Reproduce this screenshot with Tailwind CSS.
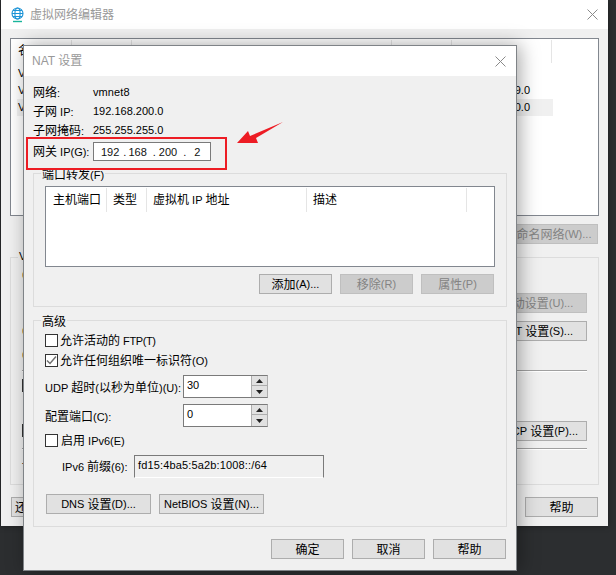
<!DOCTYPE html>
<html><head><meta charset="utf-8">
<script src="https://cdn.jsdelivr.net/npm/@tailwindcss/browser@4"></script>
</head>
<body class="m-0">
<div class="relative w-[616px] h-[575px] overflow-hidden bg-[#2c2e30] text-[11px] leading-none text-black font-['Liberation_Sans','Noto_Sans_CJK_SC',sans-serif]">

  <!-- back window -->
  <div class="absolute left-[1px] top-0 w-[607px] h-[526px] bg-[#f0f0f0] flex flex-col shadow-[0_0_6px_rgba(0,0,0,0.4)]">
    <div class="h-[29px] shrink-0 bg-white flex items-center justify-between pl-[10px] pr-[10px]">
      <div class="flex items-center gap-[6px] text-[#999] text-[12px]">
        <svg width="13" height="16" viewBox="0 0 13 16" fill="none" stroke="#1c93d6" stroke-width="1.1"><circle cx="6.5" cy="6.5" r="5.5"/><ellipse cx="6.5" cy="6.5" rx="2.6" ry="5.5"/><path d="M1 6.500H12M2 3.500H11M2 9.500H11"/><path d="M2 14.500H11" stroke="#19b59b" stroke-width="1.4"/></svg>
        <span>虚拟网络编辑器</span>
      </div>
      <svg width="11" height="11" viewBox="0 0 11 11" stroke="#8a8a8a" fill="none"><path d="M0.500 0.500L10.500 10.500M10.500 0.500L0.500 10.500"/></svg>
    </div>
    <div class="pl-[9px] pt-[9px] w-[598px] flex flex-col flex-1">
      <div class="h-[178px] shrink-0 bg-white border border-[#82878f] pt-[1px] pl-[6px]">
        <div class="flex h-[25px]">
          <div class="w-[55px] h-[23px] border-r border-[#e5e5e5] pl-[1px] pt-[5px] text-[12px]">名</div>
          <div class="w-[60px] h-[23px] border-r border-[#e5e5e5]"></div>
          <div class="w-[260px] h-[23px] border-r border-[#e5e5e5]"></div>
          <div class="w-[60px] h-[23px] border-r border-[#e5e5e5]"></div>
          <div class="w-[100px] h-[23px] border-r border-[#e5e5e5]"></div>
        </div>
        <div class="w-[536px] h-[17px] flex items-center justify-between pl-[1px] pr-[23px]"><span>V</span><span></span></div>
        <div class="w-[536px] h-[17px] flex items-center justify-between pl-[1px] pr-[23px]"><span>V</span><span>9.0</span></div>
        <div class="w-[536px] h-[17px] flex items-center justify-between pl-[1px] pr-[23px] bg-[#f0f0f0]"><span>V</span><span>0.0</span></div>
      </div>
      <div class="mt-[8px] h-[20px] flex justify-end pr-[1px]">
        <div class="w-[100px] h-[20px] pt-[1px] bg-[#cccccc] border border-[#bfbfbf] text-[#838383] flex items-center justify-center"><span class="text-[12px]">重命名网络</span>(W)...</div>
      </div>
      <div class="relative mt-[13px] h-[228px] border border-[#dcdcdc] pl-[11px] pr-[11px] flex flex-col">
        <span class="absolute left-[7px] -top-[7px] bg-[#f0f0f0] px-[1px]">V</span>
        <div class="h-[35px] pt-[11px]"><span>(</span></div>
        <div class="h-[28px] flex justify-end">
          <div class="w-[100px] h-[20px] pt-[1px] bg-[#cccccc] border border-[#bfbfbf] text-[#838383] flex items-center justify-center"><span class="text-[12px]">自动设置</span>(U)...</div>
        </div>
        <div class="h-[25px] flex justify-between">
          <span class="pt-[4px]">(</span>
          <div class="w-[100px] h-[20px] pt-[1px] bg-[#e1e1e1] border border-[#adadad] flex items-center justify-center">NAT&nbsp;<span class="text-[12px]">设置</span>(S)...</div>
        </div>
        <div class="h-[24px] pt-[3px]"><span>(</span></div>
        <div class="h-[2px] border-t border-[#a0a0a0] border-b-white border-b"></div>
        <div class="h-[7px]"></div>
        <div class="h-[42px]"><div class="w-[13px] h-[13px] border border-[#333] bg-white"></div></div>
        <div class="h-[27px] flex justify-between">
          <div class="w-[13px] h-[13px] mt-[3px] border border-[#333] bg-white"></div>
          <div class="w-[100px] h-[20px] pt-[1px] bg-[#e1e1e1] border border-[#adadad] flex items-center justify-center">DHCP&nbsp;<span class="text-[12px]">设置</span>(P)...</div>
        </div>
        <div class="h-[2px] border-t border-[#a0a0a0] border-b-white border-b"></div>
        <div class="pt-[12px]">T</div>
      </div>
      <div class="mt-[12px] h-[20px] flex justify-between pl-[1px] pr-[1px]">
        <div class="w-[73px] h-[20px] pt-[1px] bg-[#e1e1e1] border border-[#adadad] flex items-center pl-[3px]"><span class="text-[12px]">还</span></div>
        <div class="w-[73px] h-[20px] pt-[1px] bg-[#e1e1e1] border border-[#adadad] flex items-center justify-center"><span class="text-[12px]">帮助</span></div>
      </div>
    </div>
  </div>

  <!-- NAT dialog -->
  <div class="absolute left-[23px] top-[45px] w-[494px] h-[526px] bg-[#f0f0f0] border border-[#7f8387] flex flex-col shadow-[3px_0_18px_rgba(0,0,0,0.35)]">
    <div class="h-[30px] shrink-0 bg-white flex items-center justify-between pl-[8px] pr-[10px]">
      <span class="text-[#999] text-[12px]">NAT 设置</span>
      <svg width="11" height="11" viewBox="0 0 11 11" stroke="#8a8a8a" fill="none"><path d="M0.500 0.500L10.500 10.500M10.500 0.500L0.500 10.500"/></svg>
    </div>
    <div class="pl-[9px] w-[483px] flex flex-col">
      <div class="pt-[7px]">
        <div class="h-[19px] flex items-center"><span class="w-[60px]"><span class="text-[12px]">网络</span>:</span><span class="tracking-[0.1px]">vmnet8</span></div>
        <div class="h-[19px] flex items-center"><span class="w-[60px]"><span class="text-[12px]">子网</span> IP:</span><span>192.168.200.0</span></div>
        <div class="h-[19px] flex items-center"><span class="w-[60px]"><span class="text-[12px]">子网掩码</span>:</span><span>255.255.255.0</span></div>
        <div class="h-[19px] mt-[2px] flex items-center"><span class="w-[60px]"><span class="text-[12px]">网关</span> IP(G):</span>
          <div class="w-[118px] h-[19px] pt-[1px] bg-white border border-[#7a7a7a] flex items-center pl-[7px] text-[#111]">
            <span>192</span><span class="ml-[4px]">.</span><span class="ml-[2px]">168</span><span class="ml-[6px]">.</span><span class="ml-[3px]">200</span><span class="ml-[6px]">.</span><span class="ml-[8px]">2</span>
          </div>
        </div>
      </div>

      <div class="relative mt-[12px] h-[134px] border border-[#dcdcdc] pt-[12px] pl-[11px]">
        <span class="absolute left-[7px] -top-[5px] bg-[#f0f0f0] px-[1px]"><span class="text-[12px]">端口转发</span>(F)</span>
        <div class="w-[450px] h-[81px] bg-white border border-[#82878f] pt-[1px]">
          <div class="flex h-[24px]">
            <div class="w-[61px] border-r border-[#e5e5e5] pl-[7px] flex items-center text-[12px]">主机端口</div>
            <div class="w-[40px] border-r border-[#e5e5e5] pl-[6px] flex items-center text-[12px]">类型</div>
            <div class="w-[160px] border-r border-[#e5e5e5] pl-[6px] flex items-center"><span class="text-[12px]">虚拟机</span>&nbsp;IP&nbsp;<span class="text-[12px]">地址</span></div>
            <div class="w-[160px] border-r border-[#e5e5e5] pl-[6px] flex items-center text-[12px]">描述</div>
          </div>
        </div>
        <div class="mt-[7px] w-[450px] pr-[1px] flex justify-end gap-[8px]">
          <div class="w-[73px] h-[20px] pt-[1px] bg-[#e1e1e1] border border-[#adadad] flex items-center justify-center"><span class="text-[12px]">添加</span>(A)...</div>
          <div class="w-[73px] h-[20px] pt-[1px] bg-[#cccccc] border border-[#bfbfbf] text-[#838383] flex items-center justify-center"><span class="text-[12px]">移除</span>(R)</div>
          <div class="w-[73px] h-[20px] pt-[1px] bg-[#cccccc] border border-[#bfbfbf] text-[#838383] flex items-center justify-center"><span class="text-[12px]">属性</span>(P)</div>
        </div>
      </div>

      <div class="relative mt-[13px] h-[207px] border border-[#dcdcdc] pt-[13px] pl-[11px] flex flex-col">
        <span class="absolute left-[7px] -top-[5px] bg-[#f0f0f0] px-[1px] text-[12px]">高级</span>
        <div class="h-[13px] flex items-center gap-[2px]">
          <div class="w-[13px] h-[13px] border border-[#333] bg-white"></div>
          <span><span class="text-[12px]">允许活动的</span> <span class="tracking-[-0.4px]">FTP(T)</span></span>
        </div>
        <div class="mt-[7px] h-[13px] flex items-center gap-[2px]">
          <div class="w-[13px] h-[13px] border border-[#333] bg-white flex items-center justify-center">
            <svg width="11" height="11" viewBox="0 0 11 11" fill="none" stroke="#707070" stroke-width="1.500"><path d="M1 5.500L4 8.500L10 1.500"/></svg>
          </div>
          <span><span class="text-[12px]">允许任何组织唯一标识符</span>(O)</span>
        </div>
        <div class="mt-[8px] h-[23px] flex items-center">
          <span class="w-[138px] pt-[2px]">UDP&nbsp;<span class="text-[12px]">超时</span>(<span class="text-[12px]">以秒为单位</span>)(U):</span>
          <div class="w-[85px] h-[23px] flex bg-white border border-[#7a7a7a] border-r-[#adadad]">
            <span class="w-[67px] pl-[3px] pt-[4px]">30</span>
            <div class="flex-1 flex flex-col bg-[#f0f0f0] border-l border-[#adadad]">
              <div class="h-[10px] border-b border-[#adadad] bg-[#e1e1e1] flex items-center justify-center"><svg width="7" height="4" viewBox="0 0 7 4"><path d="M0 4L3.500 0L7 4Z" fill="#222"/></svg></div>
              <div class="flex-1 bg-[#e1e1e1] flex items-center justify-center"><svg width="7" height="4" viewBox="0 0 7 4"><path d="M0 0L3.500 4L7 0Z" fill="#222"/></svg></div>
            </div>
          </div>
        </div>
        <div class="mt-[6px] h-[23px] flex items-center">
          <span class="w-[138px] pt-[2px]"><span class="text-[12px]">配置端口</span>(C):</span>
          <div class="w-[85px] h-[23px] flex bg-white border border-[#7a7a7a] border-r-[#adadad]">
            <span class="w-[67px] pl-[3px] pt-[4px]">0</span>
            <div class="flex-1 flex flex-col bg-[#f0f0f0] border-l border-[#adadad]">
              <div class="h-[10px] border-b border-[#adadad] bg-[#e1e1e1] flex items-center justify-center"><svg width="7" height="4" viewBox="0 0 7 4"><path d="M0 4L3.500 0L7 4Z" fill="#222"/></svg></div>
              <div class="flex-1 bg-[#e1e1e1] flex items-center justify-center"><svg width="7" height="4" viewBox="0 0 7 4"><path d="M0 0L3.500 4L7 0Z" fill="#222"/></svg></div>
            </div>
          </div>
        </div>
        <div class="mt-[7px] h-[13px] flex items-center gap-[3px]">
          <div class="w-[13px] h-[13px] border border-[#333] bg-white"></div>
          <span><span class="text-[12px]">启用</span> IPv6(E)</span>
        </div>
        <div class="mt-[8px] h-[23px] flex items-center pl-[17px]">
          <span class="w-[72px] pt-[1px]">IPv6 <span class="text-[12px]">前缀</span>(6):</span>
          <div class="w-[190px] h-[23px] bg-[#f0f0f0] border border-[#7a7a7a] border-b-white pl-[3px] pb-[2px] flex items-center tracking-[0.15px]">fd15:4ba5:5a2b:1008::/64</div>
        </div>
        <div class="mt-[16px] ml-[1px] flex gap-[8px]">
          <div class="w-[105px] h-[20px] pt-[1px] bg-[#e1e1e1] border border-[#adadad] flex items-center justify-center">DNS&nbsp;<span class="text-[12px]">设置</span>(D)...</div>
          <div class="w-[105px] h-[20px] pt-[1px] bg-[#e1e1e1] border border-[#adadad] flex items-center justify-center">NetBIOS&nbsp;<span class="text-[12px]">设置</span>(N)...</div>
        </div>
      </div>

      <div class="mt-[12px] pr-[1px] w-[474px] flex justify-end gap-[8px] text-[12px]">
        <div class="w-[73px] h-[20px] pt-[1px] bg-[#e1e1e1] border border-[#adadad] flex items-center justify-center">确定</div>
        <div class="w-[73px] h-[20px] pt-[1px] bg-[#e1e1e1] border border-[#adadad] flex items-center justify-center">取消</div>
        <div class="w-[73px] h-[20px] pt-[1px] bg-[#e1e1e1] border border-[#adadad] flex items-center justify-center">帮助</div>
      </div>
    </div>
  </div>

  <!-- annotations -->
  <div class="absolute left-[26px] top-[137px] w-[201px] h-[33px] border-2 border-[#ed1c24]"></div>
  <svg class="absolute left-[230px] top-[115px]" width="60" height="35" viewBox="230 115 60 35"><polygon points="237,143 248,131 250,136 283,122 256,138 258,143" fill="#ed1c24"/></svg>
</div>
</body></html>
